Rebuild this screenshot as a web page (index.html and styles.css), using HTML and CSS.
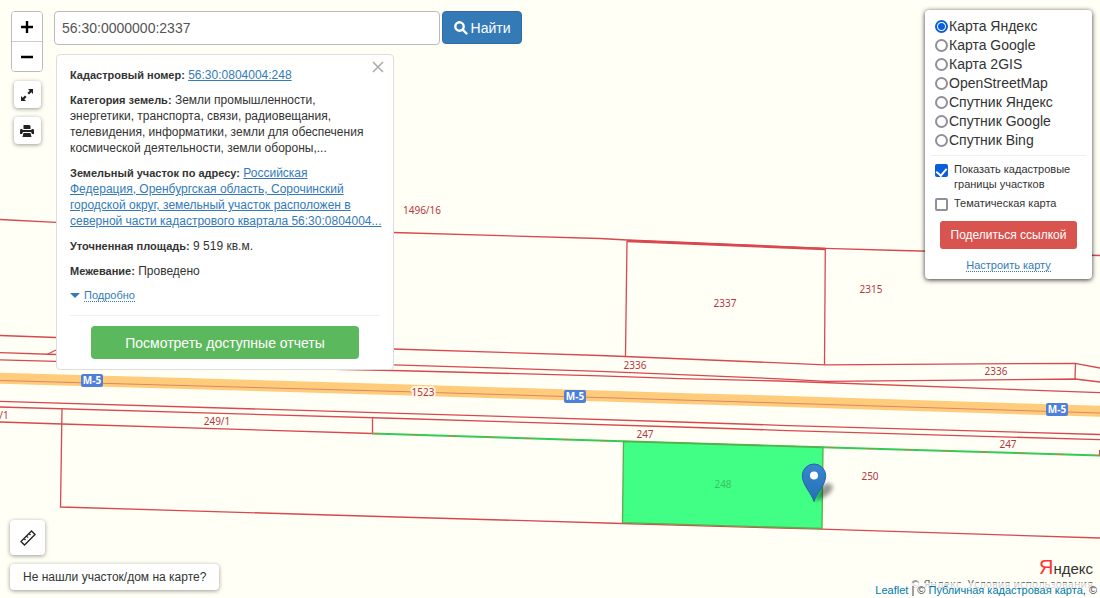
FILE: index.html
```html
<!DOCTYPE html>
<html lang="ru">
<head>
<meta charset="utf-8">
<meta name="viewport" content="width=device-width, initial-scale=1">
<title>Публичная кадастровая карта</title>
<link rel="stylesheet" href="styles.css">
</head>
<body>
<main class="app">
  <svg class="map" viewBox="0 0 1100 598" preserveAspectRatio="xMidYMid slice" role="img" aria-label="Карта участков">
    <defs>
      <linearGradient id="pin" x1="0" y1="0" x2="0" y2="1">
        <stop offset="0" stop-color="#3a86cf"/>
        <stop offset="1" stop-color="#2470b4"/>
      </linearGradient>
      <filter id="soft" x="-50%" y="-50%" width="200%" height="200%"><feGaussianBlur stdDeviation="2"/></filter>
    </defs>
    <polyline class="road" points="-5,378 400,389.7 680,398.5 780,401.3 1105,411.4"/>
    <polyline class="road-axis" points="0,380.5 400,391.5 680,400 780,403 1100,413"/>
    <g class="border">
      <polyline points="0,219.5 56,222.3 393,232.5 600,238.5 627,240 825,248.3 900,250.5 1100,255.5"/>
      <polyline class="border-bold" points="627,241 825,249"/>
      <path d="M627 241L625.5 356M825.3 249L824.5 364.7"/>
      <polyline points="0,335.5 56,337.5 393,349 600,355.5 625,356.5 825,364.8 1075,363.3 1100,368"/>
      <polyline points="0,352.7 56,354.5 393,364.8 600,371.3 680,374.6 780,378.9 826,381.4 1075,379 1100,382"/>
      <path d="M47 354.5L56 350M1075.5 363.5L1075 379"/>
      <polyline points="0,359.8 56,361.3 335,369.3 393,370.5 600,375.8 680,378.6 780,381 1100,392.7"/>
      <polyline points="0,401.3 400,413.3 680,422 780,425.3 1100,434.5"/>
      <polyline points="0,407 400,418.5 680,427 780,430.3 1100,439.7"/>
      <polyline points="0,422 62,424 372.5,433.5 372.5,418.2"/>
      <polyline points="62,409 60.5,507 380,516.5 622,523.5 822,529.2 1100,538"/>
    </g>
    <polyline class="green-line" points="372,433.5 622,441.3 822,447.2 1100,455.6"/>
    <polyline class="green-dash" points="372,433.5 622,441.3 822,447.2 1100,455.6"/>
    <polygon class="parcel" points="623.5,441.5 823,447.5 822,528.5 622.5,522.7"/>
    <path class="parcel-edge" d="M1099.5 450V455.5"/>
    <g class="num">
      <text x="422" y="214">1496/16</text>
      <text x="725" y="307">2337</text>
      <text x="871" y="293">2315</text>
      <text x="635" y="369">2336</text>
      <text x="996" y="375">2336</text>
      <text class="halo" x="423" y="396">1523</text>
      <text x="645" y="438">247</text>
      <text x="1008" y="448">247</text>
      <text class="selected" x="723" y="488">248</text>
      <text x="217" y="425">249/1</text>
      <text x="4" y="419">/1</text>
      <text x="870" y="480">250</text>
    </g>
    <g class="shield">
      <rect x="81" y="374" width="22" height="13" rx="2"/><text x="92" y="384">М-5</text>
      <rect x="564" y="390" width="22" height="13" rx="2"/><text x="575" y="400">М-5</text>
      <rect x="1046" y="403" width="22" height="13" rx="2"/><text x="1057" y="413">М-5</text>
    </g>
    <path d="M814 501L821 487Q828 480 833 486Q832 496 814 501Z" fill="#000" opacity=".4" filter="url(#soft)"/>
    <path d="M814 501.500C811.500 493 802.300 485 802.300 475.700A11.700 11.700 0 0 1 825.700 475.700C825.700 485 816.500 493 814 501.500Z" fill="url(#pin)" stroke="#2467a5"/>
    <circle cx="814" cy="475.500" r="4" fill="#fff"/>
  </svg>

  <div class="controls">
    <div class="tools">
      <div class="zoom">
        <button type="button" aria-label="Приблизить"><svg viewBox="0 0 14 14"><path d="M7 1V13M1 7H13"/></svg></button>
        <button type="button" aria-label="Отдалить"><svg viewBox="0 0 14 14"><path d="M1 7H13"/></svg></button>
      </div>
      <button class="tool" type="button" aria-label="Во весь экран">
        <svg viewBox="0 0 16 16"><path d="M9 2H14V7L12.300 5.300L10 7.600L8.400 6L10.700 3.700ZM7 14H2V9L3.700 10.700L6 8.400L7.600 10L5.300 12.300Z"/></svg>
      </button>
      <button class="tool" type="button" aria-label="Печать">
        <svg viewBox="0 0 16 16"><path d="M4.500 2H10.500L11.500 3V6H4.500ZM2 6H3.500V7H12.500V6H14Q15 6 15 7.500V11H13L12 9H4L3 11H1V7.500Q1 6 2 6ZM4.500 10H11.500L12.500 14H3.500Z"/></svg>
      </button>
    </div>

    <section class="middle">
      <form class="search">
        <input type="text" aria-label="Кадастровый номер или адрес" value="56:30:0000000:2337">
        <button type="button"><svg viewBox="0 0 14 14"><circle cx="5.500" cy="5.500" r="4.200"/><path d="M8.700 8.700L12.500 12.500"/></svg>Найти</button>
      </form>
      <article class="card">
        <button class="close" type="button" aria-label="Закрыть"><svg viewBox="0 0 12 12"><path d="M1 1L11 11M11 1L1 11"/></svg></button>
        <p><b>Кадастровый номер:</b> <a href="#">56:30:0804004:248</a></p>
        <p><b>Категория земель:</b> Земли промышленности,<br>энергетики, транспорта, связи, радиовещания,<br>телевидения, информатики, земли для обеспечения<br>космической деятельности, земли обороны,...</p>
        <p><b>Земельный участок по адресу:</b> <a href="#">Российская<br>Федерация, Оренбургская область, Сорочинский<br>городской округ, земельный участок расположен в<br>северной части кадастрового квартала 56:30:0804004...</a></p>
        <p><b>Уточненная площадь:</b> 9 519 кв.м.</p>
        <p><b>Межевание:</b> Проведено</p>
        <p class="more"><span class="caret"></span><a class="dotted" href="#">Подробно</a></p>
        <div class="actions">
          <button class="reports" type="button">Посмотреть доступные отчеты</button>
        </div>
      </article>
    </section>

    <aside class="panel">
      <label class="layer"><input type="radio" name="layer" checked>Карта Яндекс</label>
      <label class="layer"><input type="radio" name="layer">Карта Google</label>
      <label class="layer"><input type="radio" name="layer">Карта 2GIS</label>
      <label class="layer"><input type="radio" name="layer">OpenStreetMap</label>
      <label class="layer"><input type="radio" name="layer">Спутник Яндекс</label>
      <label class="layer"><input type="radio" name="layer">Спутник Google</label>
      <label class="layer"><input type="radio" name="layer">Спутник Bing</label>
      <hr>
      <label class="option"><input type="checkbox" checked><span>Показать кадастровые границы участков</span></label>
      <label class="option"><input type="checkbox"><span>Тематическая карта</span></label>
      <button class="share" type="button">Поделиться ссылкой</button>
      <a class="dotted" href="#">Настроить карту</a>
    </aside>
  </div>

  <footer class="bottom">
    <div class="help">
      <button class="ruler" type="button" aria-label="Линейка">
        <svg viewBox="0 0 18 18"><path d="M2 12.500L12.500 2L16 5.500L5.500 16ZM5 9.500L6.500 11M7.500 7L9 8.500M10 4.500L11.500 6"/></svg>
      </button>
      <button class="ask" type="button">Не нашли участок/дом на карте?</button>
    </div>
    <div class="credits">
      <div class="logo"><span>Я</span>ндекс</div>
      <div class="terms">© Яндекс&nbsp; Условия использования</div>
      <div class="attribution"><a href="#">Leaflet</a> | © <a href="#">Публичная кадастровая карта</a>, ©</div>
    </div>
  </footer>
</main>
</body>
</html>
```
FILE: styles.css
```css
* { box-sizing: border-box; }

body {
  margin: 0;
  background: #fffff6;
  color: #333;
  font: 12px/16px "Liberation Sans", Arial, sans-serif;
}

button {
  margin: 0;
  padding: 0;
  border: 0;
  color: inherit;
  font: inherit;
  cursor: pointer;
}

a { color: #337ab7; }
hr { width: 100%; margin: 0; border: 0; border-top: 1px solid #eee; }

.app {
  position: relative;
  display: flex;
  flex-direction: column;
  justify-content: space-between;
  min-height: 100vh;
}

/* Map layer under the controls */
.map {
  position: absolute;
  inset: 0;
  width: 100%;
  height: 100%;
}

.road { fill: none; stroke: #ffcc7c; stroke-width: 11; }
.road-axis { fill: none; stroke: #dc8766; stroke-width: 1; }
.border { fill: none; stroke: #d9484f; stroke-width: 1.3; }
.border-bold { stroke-width: 2.5; }
.green-line { fill: none; stroke: #35c956; stroke-width: 2; }
.green-dash { fill: none; stroke: #b08a48; stroke-width: 1; stroke-dasharray: 8 30; }
.parcel { fill: #40ff84; stroke: #5cab4c; stroke-width: 1.3; }
.parcel-edge { stroke: #d9484f; }
.num {
  fill: #b5373e;
  font: 10px "Noto Sans", sans-serif;
  text-anchor: middle;
}
.num .selected { fill: #3bc266; }
.num .halo { stroke: #fff6e8; stroke-width: 4; paint-order: stroke; stroke-linejoin: round; }
.shield rect { fill: #4d7fdb; }
.shield text { fill: #fff; font: bold 10px "Noto Sans", sans-serif; text-anchor: middle; }

/* Top controls */
.controls {
  position: relative;
  display: flex;
  align-items: flex-start;
  gap: 11px;
  padding: 10px 8px 0 11px;
}

.tools {
  display: flex;
  flex-direction: column;
  align-items: center;
  gap: 9px;
  padding-top: 1px;
}

.zoom {
  display: flex;
  flex-direction: column;
  width: 32px;
  overflow: hidden;
  border: 1px solid #bbb;
  border-radius: 4px;
  background: #fff;
}
.zoom button {
  display: grid;
  place-items: center;
  height: 29px;
  background: #fff;
}
.zoom button + button { height: 30px; border-top: 1px solid #ccc; }
.zoom svg { width: 14px; fill: none; stroke: #000; stroke-width: 2.4; }

.tool, .ruler, .ask {
  border-radius: 4px;
  background: #fff;
  box-shadow: 0 1px 4px rgba(0, 0, 0, .4);
}
.tool { display: grid; place-items: center; width: 27px; height: 27px; }
.tool svg { width: 16px; fill: #222; }

.middle { flex: 0 1 468px; margin-right: auto; padding-top: 1px; }

.search { display: flex; gap: 2px; margin-bottom: 9px; }
.search input {
  flex: 1;
  min-width: 0;
  height: 34px;
  padding: 0 7px;
  border: 1px solid #bbb;
  border-radius: 4px;
  background: #fff;
  color: #555;
  font: 14px "Liberation Sans", Arial, sans-serif;
}
.search button {
  display: flex;
  align-items: center;
  justify-content: center;
  gap: 3px;
  width: 80px;
  height: 33px;
  border: 1px solid #2e6da4;
  border-radius: 4px;
  background: #337ab7;
  color: #fff;
  font-size: 14px;
}
.search svg { width: 14px; fill: none; stroke: #fff; stroke-width: 2.4; stroke-linecap: round; }

.card {
  position: relative;
  width: 338px;
  margin-left: 2px;
  padding: 12px 8px 10px 13px;
  border: 1px solid #ddd;
  border-radius: 4px;
  background: #fff;
}
.card p { margin: 0 0 9px; }
.card b { font-size: 11px; }
.close {
  position: absolute;
  top: 6px;
  right: 9px;
  width: 12px;
  height: 12px;
  background: none;
}
.close svg { display: block; width: 12px; fill: none; stroke: #aaa; stroke-width: 1.5; }

.dotted {
  border-bottom: 1px dotted #337ab7;
  font-size: 11px;
  line-height: 12px;
  text-decoration: none;
}
.card .more { display: flex; align-items: center; gap: 4px; margin: 10px 0 13px; }
.caret {
  border: 5px solid transparent;
  border-top-color: #337ab7;
  border-bottom: 0;
}
.actions {
  display: flex;
  justify-content: center;
  margin-right: 5px;
  padding-top: 10px;
  border-top: 1px solid #eee;
}
.reports {
  width: 268px;
  height: 33px;
  border-radius: 4px;
  background: #5cb85c;
  color: #fff;
  font-size: 14px;
}

/* Layer panel */
.panel {
  display: flex;
  flex-direction: column;
  width: 167px;
  padding: 7px 6px;
  border-radius: 4px;
  background: #fff;
  box-shadow: 0 1px 5px rgba(0, 0, 0, .8);
}
.panel input {
  flex: none;
  appearance: none;
  width: 13px;
  height: 13px;
  margin: 0;
  border: 2px solid #8f8f9d;
  background: #fff;
}
.panel input[type="radio"] { border-radius: 50%; }
.panel input[type="checkbox"] { border-radius: 2px; }
.panel input[type="radio"]:checked {
  border-color: #0a5fd8;
  background: radial-gradient(circle, #0a5fd8 0 3px, #fff 4px);
}
.panel input[type="checkbox"]:checked {
  display: grid;
  place-items: center;
  border-color: #0a5fd8;
  background: #0a5fd8;
}
.panel input[type="checkbox"]:checked::after {
  content: "";
  width: 5px;
  height: 8px;
  margin-bottom: 3px;
  border: solid #fff;
  border-width: 0 2px 2px 0;
  transform: rotate(40deg);
}
.layer {
  display: flex;
  align-items: center;
  gap: 1px;
  padding-left: 4px;
  font-size: 14px;
  line-height: 19px;
}
.panel hr { margin: 5px 0 6px; }
.option {
  display: flex;
  gap: 6px;
  margin-bottom: 4px;
  padding-left: 4px;
  font-size: 11px;
  line-height: 15px;
}
.option input { margin-top: 2px; }
.share {
  align-self: center;
  width: 137px;
  height: 28px;
  margin: 6px 0 10px;
  border-radius: 3px;
  background: #d9534f;
  color: #fff;
}
.panel .dotted { align-self: center; }

/* Bottom row */
.bottom {
  position: relative;
  display: flex;
  align-items: flex-end;
  justify-content: space-between;
}
.help {
  display: flex;
  flex-direction: column;
  align-items: flex-start;
  gap: 9px;
  padding: 0 0 8px 10px;
}
.ruler { display: grid; place-items: center; width: 35px; height: 35px; }
.ruler svg { width: 18px; fill: none; stroke: #222; stroke-width: 1.4; }
.ask { height: 26px; padding: 0 13px; }

.credits { position: relative; text-align: right; }
.logo {
  padding-right: 7px;
  color: #333;
  font: 15px/20px "Liberation Sans", Arial, sans-serif;
}
.logo span { color: #f33; font-size: 20px; }
.terms {
  padding: 0 7px 7px 0;
  color: #666;
  font: 10px/12px "DejaVu Sans", sans-serif;
}
.attribution {
  position: absolute;
  right: 0;
  bottom: 0;
  padding: 0 3px 0 5px;
  background: rgba(255, 255, 255, .7);
  font-size: 11px;
  line-height: 15px;
  white-space: nowrap;
}
.attribution a { color: #0078a8; text-decoration: none; }
```
